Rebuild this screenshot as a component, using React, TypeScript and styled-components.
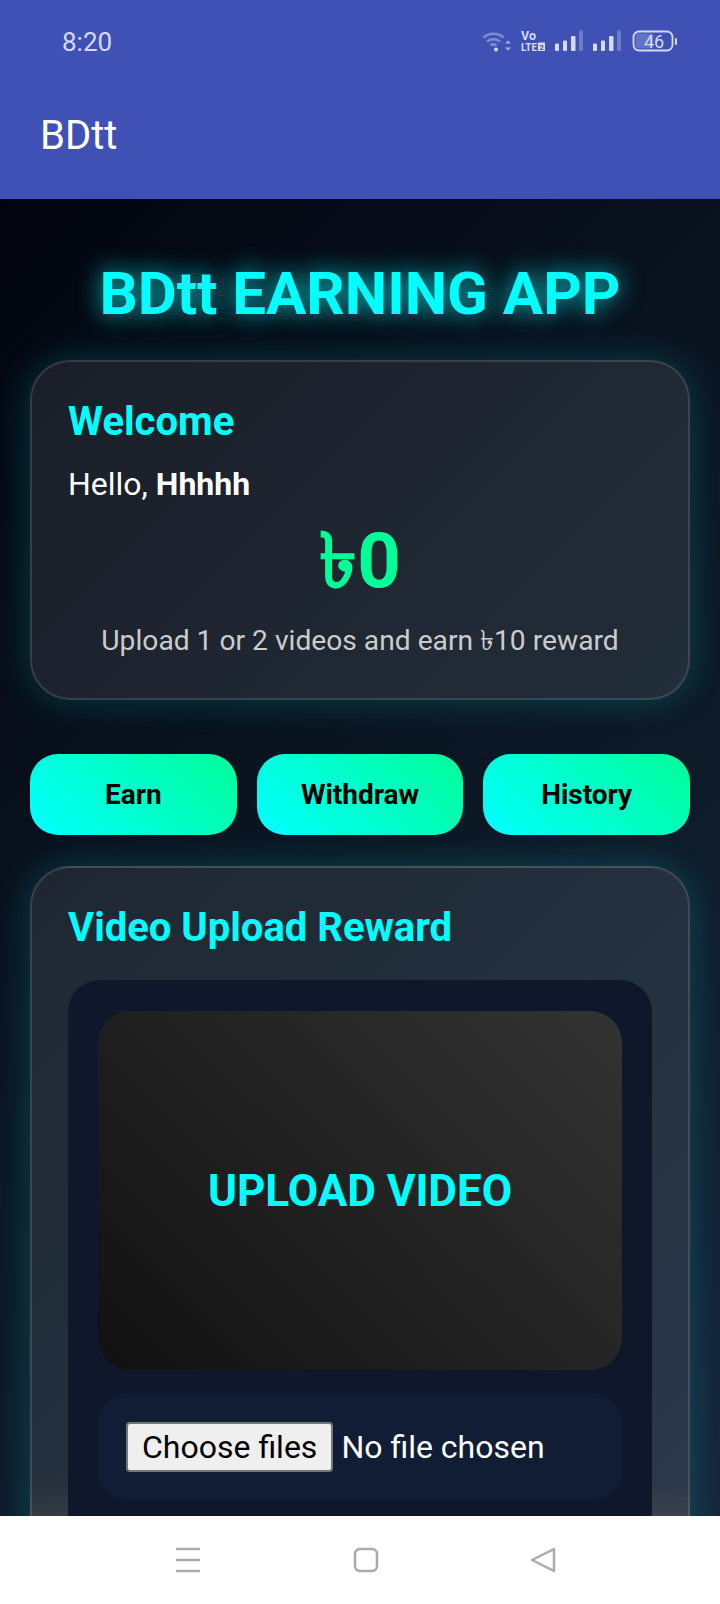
import React from 'react';
import styled, { createGlobalStyle } from 'styled-components';

const GlobalStyle = createGlobalStyle`
	* { box-sizing: border-box; }
	html, body { margin: 0; padding: 0; background: #fff; }
	body { font-family: Roboto, "Noto Sans", "DejaVu Sans", sans-serif; }
`;

const Screen = styled.div`
	display: flex;
	flex-direction: column;
	width: 720px;
	height: 1604px;
	overflow: hidden;
`;

const TopBar = styled.header`
	flex: 0 0 199px;
	background: #3f51b5;
`;

const StatusBar = styled.div`
	display: flex;
	align-items: center;
	justify-content: space-between;
	height: 84px;
	padding: 0 40px 0 62px;
`;

const Clock = styled.span`
	font-size: 26px;
	color: #d5daf2;
`;

const StatusIcons = styled.svg`
	display: block;
`;

const AppTitle = styled.div`
	padding: 28px 0 0 40px;
	font-size: 40px;
	line-height: 47px;
	color: #fff;
`;

const Content = styled.main`
	flex: 1;
	min-height: 0;
	overflow: hidden;
	padding: 60px 30px 0;
	background: linear-gradient(135deg, #02050f, #0d1a28 60%, #16263a);
`;

const Heading = styled.h1`
	margin: 0 0 31px;
	font-size: 60px;
	line-height: 70px;
	font-weight: 700;
	text-align: center;
	color: #00ffff;
	text-shadow: 0 0 24px rgba(0, 255, 255, 0.8);
`;

const Card = styled.section<{ $fade?: boolean }>`
	padding: 36px 36px 40px;
	border: 2px solid rgba(255, 255, 255, 0.12);
	border-radius: 40px;
	background: ${({ $fade }) => ($fade ? 'linear-gradient(180deg, transparent 610px, rgba(110, 90, 80, 0.25) 650px), ' : '')}rgba(255, 255, 255, 0.09);
	box-shadow: 0 0 36px rgba(0, 255, 255, 0.2);
`;

const CardTitle = styled.h2`
	margin: 0;
	font-size: 40px;
	line-height: 48px;
	font-weight: 700;
	color: #00ffff;
`;

const Greeting = styled.p`
	margin: 19px 0 0;
	font-size: 32px;
	line-height: 38px;
	color: #fff;
`;

const Balance = styled.div`
	margin-top: 20px;
	font-size: 76px;
	line-height: 76px;
	font-weight: 700;
	text-align: center;
	color: #00ff99;
`;

const Note = styled.p`
	margin: 25px 0 0;
	font-size: 28.2px;
	line-height: 34px;
	text-align: center;
	color: #cccccc;
`;

const Actions = styled.nav`
	display: grid;
	grid-template-columns: repeat(3, 1fr);
	gap: 20px;
	margin: 54px 0 31px;
`;

const ActionButton = styled.button`
	height: 81px;
	border: 0;
	border-radius: 28px;
	background: linear-gradient(45deg, #00ffff, #00ff99);
	font-family: inherit;
	font-size: 28px;
	font-weight: 700;
	color: #000;
`;

const UploadPanel = styled.div`
	margin-top: 28px;
	padding: 31px 30px 70px;
	border-radius: 32px;
	background: #0f172a;
`;

const VideoBox = styled.div`
	display: flex;
	align-items: center;
	justify-content: center;
	height: 359px;
	border-radius: 32px;
	background: linear-gradient(45deg, #111, #333);
	font-size: 44px;
	font-weight: 700;
	color: #00ffff;
`;

const FileRow = styled.div`
	display: flex;
	align-items: center;
	gap: 8px;
	height: 106px;
	margin-top: 24px;
	padding: 0 28px;
	border-radius: 28px;
	background: #111d35;
	font-size: 32px;
	color: #fff;
`;

const FileButton = styled.button`
	height: 50px;
	padding: 0 14px;
	border: 2px solid #767676;
	border-radius: 4px;
	background: #efefef;
	font-family: inherit;
	font-size: 32px;
	color: #000;
`;

const BottomNav = styled.footer`
	display: flex;
	align-items: center;
	justify-content: space-between;
	flex: 0 0 88px;
	padding: 0 164px 0 175px;
	background: #fff;
`;

const SignalBars: React.FC<{ x: number }> = ({ x }) => (
	<g transform={`translate(${x} 0)`}>
		<rect x="0" y="14.500" width="4" height="7.500" rx="1" />
		<rect x="8" y="11.500" width="4" height="10.500" rx="1" />
		<rect x="16" y="7" width="4.500" height="15" rx="1" />
		<rect x="24" y="1.500" width="4" height="20.500" rx="1" fill="#6f7dc9" />
	</g>
);

const App: React.FC = () => {
	return (
		<Screen>
			<GlobalStyle />
			<TopBar>
				<StatusBar>
					<Clock>8:20</Clock>
					<StatusIcons width="200" height="26" viewBox="0 0 200 26" fill="#d5daf2">
						<path d="M3.500 8.500a15 15 0 0 1 20 0M7 12.500a10 10 0 0 1 13 0M10.500 16.500a5 5 0 0 1 6 0" fill="none" stroke="#7d8ad0" strokeWidth="2.600" />
						<circle cx="16" cy="20.500" r="2" />
						<path d="M25 14.500l3 -3 3 3zM25 18.500l3 3 3 -3z" fill="#a9b2e4" />
						<text x="41" y="11" fontFamily="Roboto, sans-serif" fontSize="12.500" fontWeight="700">Vo</text>
						<text x="41" y="22" fontFamily="Roboto, sans-serif" fontSize="11.500" fontWeight="700" textLength="16" lengthAdjust="spacingAndGlyphs">LTE</text>
						<rect x="58" y="13.500" width="7" height="8.500" fill="#d5daf2" />
						<text x="59.500" y="21" fontFamily="Roboto, sans-serif" fontSize="7.500" fontWeight="700" fill="#3f51b5">2</text>
						<SignalBars x={75} />
						<SignalBars x={113} />
						<rect x="153.500" y="2.500" width="39" height="19" rx="5.500" fill="none" stroke="#d5daf2" strokeWidth="1.800" />
						<rect x="155.500" y="4.500" width="18" height="15" rx="3" fill="#6272c6" />
						<text x="164" y="18.500" fontFamily="Roboto, sans-serif" fontSize="18" fill="#d5daf2">46</text>
						<rect x="195" y="9" width="2" height="7" rx="1" />
					</StatusIcons>
				</StatusBar>
				<AppTitle>BDtt</AppTitle>
			</TopBar>
			<Content>
				<Heading>BDtt EARNING APP</Heading>
				<Card>
					<CardTitle>Welcome</CardTitle>
					<Greeting>Hello, <b>Hhhhh</b></Greeting>
					<Balance>৳0</Balance>
					<Note>Upload 1 or 2 videos and earn ৳10 reward</Note>
				</Card>
				<Actions>
					<ActionButton>Earn</ActionButton>
					<ActionButton>Withdraw</ActionButton>
					<ActionButton>History</ActionButton>
				</Actions>
				<Card $fade>
					<CardTitle>Video Upload Reward</CardTitle>
					<UploadPanel>
						<VideoBox>UPLOAD VIDEO</VideoBox>
						<FileRow>
							<FileButton>Choose files</FileButton>
							No file chosen
						</FileRow>
					</UploadPanel>
				</Card>
			</Content>
			<BottomNav>
				<svg width="26" height="26" viewBox="0 0 26 26" stroke="#aaa" strokeWidth="2.500"><path d="M1 2h24M1 13h24M1 24h24" /></svg>
				<svg width="26" height="26" viewBox="0 0 26 26" fill="none" stroke="#aaa" strokeWidth="2.500"><rect x="2" y="2" width="22" height="22" rx="5" /></svg>
				<svg width="26" height="26" viewBox="0 0 26 26" fill="none" stroke="#aaa" strokeWidth="2.500" strokeLinejoin="round"><path d="M24 2v22L2 13z" /></svg>
			</BottomNav>
		</Screen>
	);
};

export default App;
